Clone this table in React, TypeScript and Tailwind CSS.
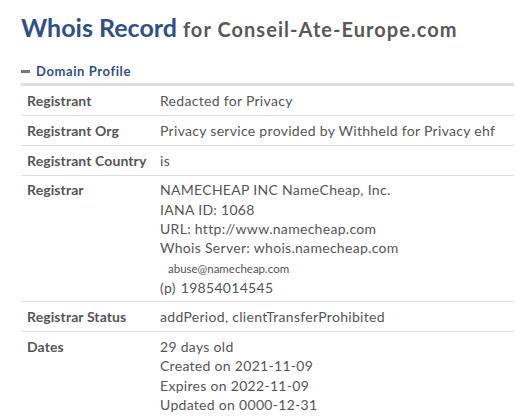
const rows: {label: string; value: React.ReactNode}[] = [
  {label: 'Registrant', value: 'Redacted for Privacy'},
  {label: 'Registrant Org', value: 'Privacy service provided by Withheld for Privacy ehf'},
  {label: 'Registrant Country', value: 'is'},
  {
    label: 'Registrar',
    value: (
      <>
        <div>NAMECHEAP INC NameCheap, Inc.</div>
        <div>IANA ID: 1068</div>
        <div>URL: http://www.namecheap.com</div>
        <div>Whois Server: whois.namecheap.com</div>
        <div className="mt-[1px] pl-[8px] text-[11.5px] leading-[19px] tracking-normal">abuse@namecheap.com</div>
        <div className="leading-[19px]">
          <span>(p)</span>
          <span className="ml-[5px]">19854014545</span>
        </div>
      </>
    ),
  },
  {label: 'Registrar Status', value: 'addPeriod, clientTransferProhibited'},
  {
    label: 'Dates',
    value: (
      <>
        <div>29 days old</div>
        <div>Created on 2021-11-09</div>
        <div>Expires on 2022-11-09</div>
        <div>Updated on 0000-12-31</div>
      </>
    ),
  },
]

export default function App() {
  return (
    <main className="h-[416px] w-[515px] overflow-hidden bg-white pl-[21px] pr-[1px] font-['Lato',sans-serif] text-[#555]">
      <h1 className="pt-[11px] leading-[32px]">
        <span className="text-[25px] font-bold text-[#2f5087]">Whois Record</span>
        <span className="ml-[6px] text-[20px] font-bold tracking-[1.05px] text-[#585858]">for Conseil-Ate-Europe.com</span>
      </h1>

      <div className="mt-[15px] flex items-center gap-[6px] pb-[3px]">
        <span className="block h-[3px] w-[9px] bg-[#777]" />
        <span className="text-[13px] font-bold leading-[18px] tracking-[0.6px] text-[#2f5087]">Domain Profile</span>
      </div>

      <div className="border-t-[3px] border-[#ddd]">
        {rows.map((row) => (
          <div key={row.label} className="flex border-b border-[#ddd] py-[4.8px] text-[14px] leading-[19.3px]">
            <div className="w-[139px] shrink-0 pl-[6px] font-bold tracking-[0.1px] text-[#555]">{row.label}</div>
            <div className="tracking-[0.3px] text-[#555]">{row.value}</div>
          </div>
        ))}
      </div>
    </main>
  )
}
